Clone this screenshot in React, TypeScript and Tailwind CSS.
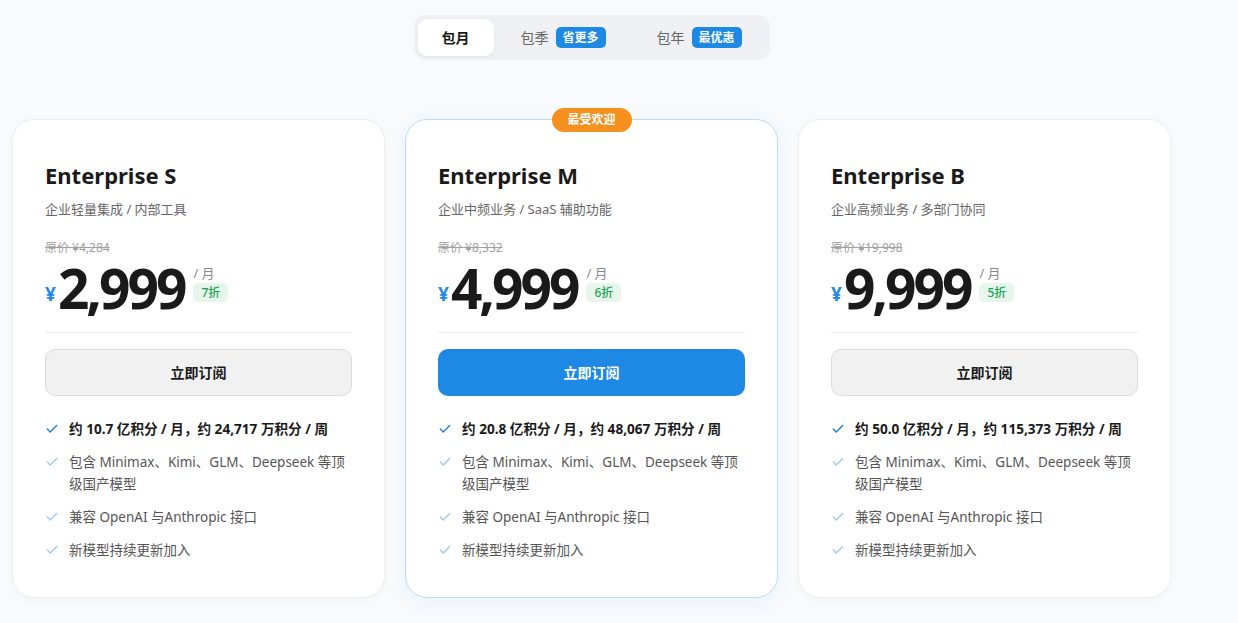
import { Check } from "lucide-react";

interface Plan {
  name: string;
  desc: string;
  original: string;
  price: string;
  discount: string;
  quota: string;
  popular?: boolean;
}

const plans: Plan[] = [
  {
    name: "Enterprise S",
    desc: "企业轻量集成 / 内部工具",
    original: "原价 ¥4,284",
    price: "2,999",
    discount: "7折",
    quota: "约 10.7 亿积分 / 月，约 24,717 万积分 / 周",
  },
  {
    name: "Enterprise M",
    desc: "企业中频业务 / SaaS 辅助功能",
    original: "原价 ¥8,332",
    price: "4,999",
    discount: "6折",
    quota: "约 20.8 亿积分 / 月，约 48,067 万积分 / 周",
    popular: true,
  },
  {
    name: "Enterprise B",
    desc: "企业高频业务 / 多部门协同",
    original: "原价 ¥19,998",
    price: "9,999",
    discount: "5折",
    quota: "约 50.0 亿积分 / 月，约 115,373 万积分 / 周",
  },
];

const features = [
  "包含 Minimax、Kimi、GLM、Deepseek 等顶级国产模型",
  "兼容 OpenAI 与Anthropic 接口",
  "新模型持续更新加入",
];

function PlanCard({ plan }: { plan: Plan }) {
  return (
    <div
      className={
        plan.popular
          ? "relative flex w-[373px] flex-col rounded-[22px] border border-[#bcdcf2] bg-white px-8 pb-[36px] pt-8 shadow-[0_4px_18px_rgba(30,136,229,0.07)]"
          : "relative flex w-[373px] flex-col rounded-[22px] border border-[#eceef1] bg-white px-8 pb-[36px] pt-8 shadow-[0_2px_10px_rgba(0,0,0,0.03)]"
      }
    >
      {plan.popular && (
        <span className="absolute left-1/2 top-[-12px] -translate-x-1/2 rounded-full bg-[#f5901e] px-4 py-[3px] text-[12px] font-bold leading-[18px] text-white">
          最受欢迎
        </span>
      )}
      <h2 className="mt-[7px] text-[22px] font-bold leading-[32px] text-[#1a1a1a]">{plan.name}</h2>
      <p className="mt-[9px] text-[13px] leading-[18px] text-[#666]">{plan.desc}</p>
      <p className="mt-[22px] text-[12px] leading-[16px] text-[#a0a0a0] line-through">{plan.original}</p>
      <div className="mt-[6px] flex items-start">
        <span className="mt-[20px] text-[19px] font-bold leading-[24px] text-[#1e88e5]">¥</span>
        <span className="ml-[2px] text-[55px] font-bold leading-[52px] tracking-[-3px] text-[#1a1a1a]">
          {plan.price}
        </span>
        <div className="ml-[9px] mt-[2px] flex flex-col items-start">
          <span className="text-[13px] leading-[18px] text-[#888]">/ 月</span>
          <span className="mt-[1px] rounded-[5px] bg-[#e6f6ec] px-[8px] text-[12px] font-medium leading-[19px] text-[#21a350]">
            {plan.discount}
          </span>
        </div>
      </div>
      <div className="mt-[18px] h-px bg-[#ececec]" />
      <button
        type="button"
        className={
          plan.popular
            ? "mt-[16px] h-[47px] rounded-[10px] bg-[#1e88e5] text-[14px] font-bold text-white"
            : "mt-[16px] h-[47px] rounded-[10px] border border-[#dcdcdc] bg-[#f1f1f1] text-[14px] font-bold text-[#1a1a1a]"
        }
      >
        立即订阅
      </button>
      <ul className="mt-[22px] flex flex-col gap-[11px]">
        <li className="flex items-start gap-[10px]">
          <Check className="mt-[4px] h-[14px] w-[14px] shrink-0 text-[#2a7fd4]" strokeWidth={2.5} />
          <span className="text-[13.6px] font-bold leading-[22px] text-[#1a1a1a]">{plan.quota}</span>
        </li>
        {features.map((f) => (
          <li key={f} className="flex items-start gap-[10px]">
            <Check className="mt-[4px] h-[14px] w-[14px] shrink-0 text-[#9fcaf0]" strokeWidth={2.5} />
            <span className="text-[13.5px] leading-[22px] text-[#555]">{f}</span>
          </li>
        ))}
      </ul>
    </div>
  );
}

export default function App() {
  return (
    <div
      className="min-h-[623px] bg-[#f8fafc] pl-[12px] pt-[15px]"
      style={{ fontFamily: '"Noto Sans", "Noto Sans CJK SC", sans-serif' }}
    >
      <div className="flex w-[1159px] flex-col items-center">
        <div className="flex items-center rounded-[12px] bg-[#eef0f3] p-[4px]">
          <button
            type="button"
            className="h-[37px] w-[76px] rounded-[9px] bg-white text-[14px] font-bold text-[#1a1a1a] shadow-[0_1px_3px_rgba(0,0,0,0.06)]"
          >
            包月
          </button>
          <button type="button" className="flex h-[37px] items-center gap-[7px] pl-[27px] pr-[25px] text-[14px] text-[#666]">
            包季
            <span className="w-[50px] rounded-[5px] bg-[#1e88e5] text-center text-[12px] font-bold leading-[21px] text-white">
              省更多
            </span>
          </button>
          <button type="button" className="flex h-[37px] items-center gap-[7px] pl-[26px] pr-[24px] text-[14px] text-[#666]">
            包年
            <span className="w-[50px] rounded-[5px] bg-[#1e88e5] text-center text-[12px] font-bold leading-[21px] text-white">
              最优惠
            </span>
          </button>
        </div>
        <div className="mt-[59px] flex gap-[20px] self-stretch">
          {plans.map((p) => (
            <PlanCard key={p.name} plan={p} />
          ))}
        </div>
      </div>
    </div>
  );
}
